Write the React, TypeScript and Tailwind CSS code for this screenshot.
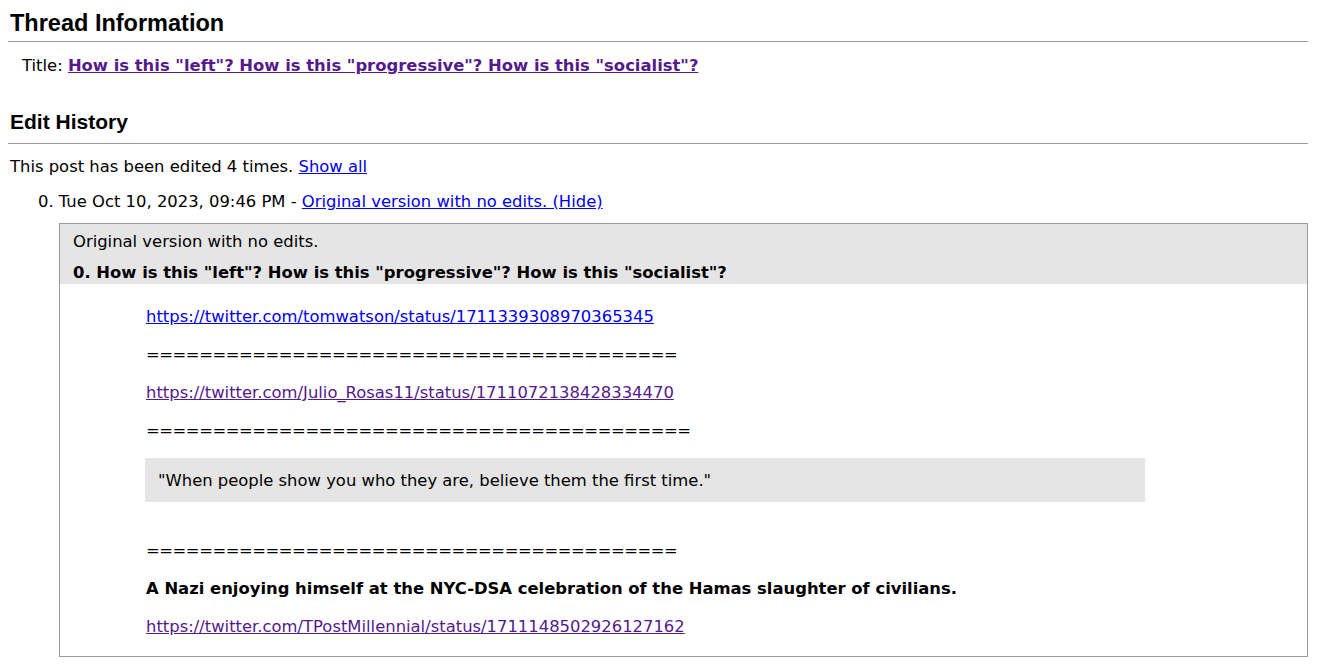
export default function App() {
  const eq40 = "========================================";
  const eq41 = "=========================================";
  const title = 'How is this "left"? How is this "progressive"? How is this "socialist"?';

  return (
    <div className="min-h-screen bg-white text-black pl-2 pr-[30px] pt-[10px] font-['DejaVu_Sans',sans-serif] text-[16.4px] leading-[19px]">
      {/* Thread info */}
      <h2 className="font-['Liberation_Sans',Arial,sans-serif] font-bold text-[23.5px] leading-[26px] pl-[2px] pb-[5px] border-b border-[#999]">
        Thread Information
      </h2>
      <div className="mt-[14px] pl-[14px]">
        Title:{" "}
        <a href="#" className="font-bold underline text-[#551a8b]">
          {title}
        </a>
      </div>

      {/* Edit history */}
      <h2 className="mt-[35px] font-['Liberation_Sans',Arial,sans-serif] font-bold text-[21px] leading-[24px] pl-[2px] pb-[9px] border-b border-[#999]">
        Edit History
      </h2>
      <div className="mt-[13px] pl-[2px]">
        This post has been edited 4 times.{" "}
        <a href="#" className="underline text-[#0000ee]">Show all</a>
      </div>
      <div className="mt-[16px] pl-[30px]">
        0. Tue Oct 10, 2023, 09:46 PM -{" "}
        <a href="#" className="underline text-[#0000ee]">Original version with no edits. (Hide)</a>
      </div>

      <div className="mt-[12px] ml-[51px] border border-[#999]">
        <div className="bg-[#e5e5e5] pl-[13px] pt-[8px] pb-[2px]">
          <div>Original version with no edits.</div>
          <div className="mt-[12px] font-bold">0. {title}</div>
        </div>
        <div className="pl-[86px] pt-[23px] pb-[20px]">
          <div className="mb-[19px]">
            <a href="#" className="underline text-[#0000ee]">https://twitter.com/tomwatson/status/1711339308970365345</a>
          </div>
          <div className="mb-[19px] tracking-[-0.45px]">{eq40}</div>
          <div className="mb-[19px]">
            <a href="#" className="underline text-[#551a8b]">https://twitter.com/Julio_Rosas11/status/1711072138428334470</a>
          </div>
          <div className="tracking-[-0.45px]">{eq41}</div>
          <div className="mt-[18px] -ml-[1px] w-[1000px] bg-[#e5e5e5] pl-[13px] pt-[13px] pb-[12px]">
            "When people show you who they are, believe them the first time."
          </div>
          <div className="mt-[39px] mb-[19px] tracking-[-0.45px]">{eq40}</div>
          <div className="mb-[19px] font-bold">
            A Nazi enjoying himself at the NYC-DSA celebration of the Hamas slaughter of civilians.
          </div>
          <div>
            <a href="#" className="underline text-[#551a8b]">https://twitter.com/TPostMillennial/status/1711148502926127162</a>
          </div>
        </div>
      </div>
    </div>
  );
}
